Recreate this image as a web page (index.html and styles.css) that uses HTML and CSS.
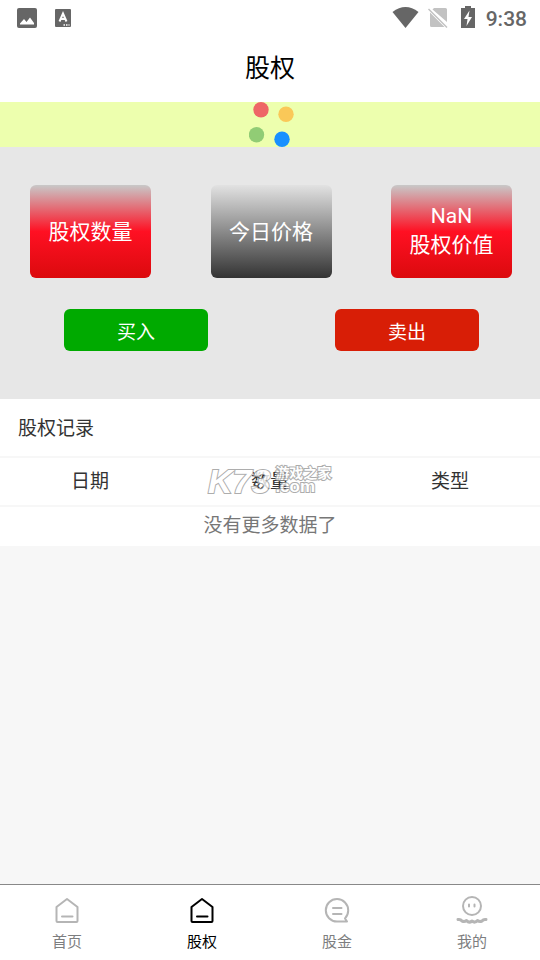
FILE: index.html
```html
<!DOCTYPE html>
<html lang="zh-CN">
<head>
<meta charset="utf-8">
<meta name="viewport" content="width=device-width, initial-scale=1">
<title>股权</title>
<link rel="stylesheet" href="styles.css">
</head>
<body>
<div class="status">
  <svg class="status-notices" viewBox="0 0 80 36" aria-hidden="true">
    <rect x="17" y="8" width="20" height="20" rx="2" fill="#666"/>
    <path d="M20 24.500V23.500L24 19l2.500 3L30 17.500 34 23v1.500z" fill="#fff"/>
    <rect x="55" y="9" width="16" height="18" rx="1" fill="#666"/>
    <path d="M59.500 21.500 63 13.500l3.500 8M61 19h4" fill="none" stroke="#fff" stroke-width="2"/>
    <path d="M63.500 25h6" stroke="#fff" stroke-width="1.500" stroke-dasharray="1.500 1"/>
  </svg>
  <div class="status-right">
    <svg class="status-signals" viewBox="0 0 88 36" aria-hidden="true">
      <path d="M.5 12Q13.500 2 26.500 12L13.500 28z" fill="#666"/>
      <path d="M42 8h11.500q1.500 0 1.500 1.500V22L40.500 9.500zM38 12.500l14.500 14.500H39.500Q38 27 38 25.500z" fill="#c2c2c2"/>
      <path d="M36.500 9 55 27.500" stroke="#c2c2c2" stroke-width="1.500"/>
      <path d="M69 8h4V6h6v2h4v20H69z" fill="#666"/>
      <path d="M77.500 10.500 72 19h3.500l-1 7 5.500-9h-3.500z" fill="#fff"/>
    </svg>
    <time class="clock">9:38</time>
  </div>
</div>
<header class="header"><h1 class="title">股权</h1></header>
<div class="loader">
  <svg class="loader-dots" viewBox="0 0 46 46" role="img" aria-label="加载中">
    <circle cx="12" cy="7.700" r="7.700" fill="#ee6666"/>
    <circle cx="37" cy="12.300" r="7.700" fill="#fac858"/>
    <circle cx="7.500" cy="32.700" r="7.700" fill="#91cc75"/>
    <circle cx="33" cy="37.300" r="7.700" fill="#1890ff"/>
  </svg>
</div>
<main class="main">
  <section class="panel">
    <div class="cards">
      <div class="card card-red"><span>股权数量</span></div>
      <div class="card card-dark"><span>今日价格</span></div>
      <div class="card card-red card-value"><span>NaN</span><span>股权价值</span></div>
    </div>
    <div class="actions">
      <button class="action buy" type="button">买入</button>
      <button class="action sell" type="button">卖出</button>
    </div>
  </section>
  <section class="records">
    <h2 class="records-title">股权记录</h2>
    <div class="table-wrap">
      <table class="table">
        <thead><tr><th>日期</th><th>数量</th><th>类型</th></tr></thead>
        <tbody><tr><td colspan="3">没有更多数据了</td></tr></tbody>
      </table>
      <div class="watermark">
        <span class="mark-logo">K73</span>
        <span class="mark-side"><span class="mark-name">游戏之家</span><span class="mark-domain">.com</span></span>
      </div>
    </div>
  </section>
</main>
<nav class="tabs">
  <a class="tab" href="#home">
    <svg class="tab-icon" viewBox="0 0 32 32" aria-hidden="true"><path d="M5.500 12 16 4 26.500 12V26q0 1-1 1h-19q-1 0-1-1zM11 21.500h10.500" /></svg>
    <span>首页</span>
  </a>
  <a class="tab tab-active" href="#equity" aria-current="page">
    <svg class="tab-icon" viewBox="0 0 32 32" aria-hidden="true"><path d="M5.500 12 16 4 26.500 12V26q0 1-1 1h-19q-1 0-1-1zM11 21.500h10.500" /></svg>
    <span>股权</span>
  </a>
  <a class="tab" href="#fund">
    <svg class="tab-icon" viewBox="0 0 32 32" aria-hidden="true"><path d="M26 26.500H16A11.200 11.200 0 1 1 27.200 15.500q0 4.500-3.200 8zM12 13h8.500M12 19h8.500"/></svg>
    <span>股金</span>
  </a>
  <a class="tab" href="#mine">
    <svg class="tab-icon" viewBox="0 0 32 32" aria-hidden="true"><circle cx="16" cy="11" r="9"/><path d="M13 9.500v2M18.500 9.500v2"/><path class="wave" d="M2 24.500q2.500-.5 4 1.500 2.500 1 4.500-.5 2.500 3 5.500.5 3 2.500 5.500-.5 2 1.500 4.500.5 1.500-2 4-1.500"/></svg>
    <span>我的</span>
  </a>
</nav>
</body>
</html>
```

FILE: styles.css
```css
* {
  box-sizing: border-box;
}

body {
  display: flex;
  flex-direction: column;
  min-height: 100vh;
  margin: 0;
  background: #f7f7f7;
  color: #333;
  font-family: Roboto, "Noto Sans CJK SC", sans-serif;
  font-size: 19px;
}

h1,
h2 {
  margin: 0;
  font-weight: 400;
}

.status {
  display: flex;
  justify-content: space-between;
  height: 36px;
  background: #fff;
}

.status-notices {
  width: 80px;
  height: 36px;
}

.status-right {
  display: flex;
  gap: 6px;
  padding-right: 13px;
}

.status-signals {
  width: 88px;
  height: 36px;
}

.clock {
  color: #666;
  font-size: 21px;
  font-weight: 500;
  line-height: 38px;
}

.header {
  background: #fff;
  text-align: center;
}

.title {
  color: #000;
  font-size: 25px;
  line-height: 66px;
}

.loader {
  display: flex;
  justify-content: center;
  height: 45px;
  padding-left: 4px;
  background: #edffae;
}

.loader-dots {
  width: 46px;
  height: 46px;
}

.main {
  flex: 1;
}

.panel {
  padding: 38px 0 48px;
  background: #e7e7e7;
}

.cards,
.actions {
  display: flex;
  justify-content: space-between;
}

.cards {
  padding: 0 28px 0 30px;
}

.card {
  display: flex;
  flex-direction: column;
  align-items: center;
  justify-content: center;
  width: 121px;
  height: 93px;
  padding-top: 2px;
  border-radius: 6px;
  color: #fff;
  font-size: 21px;
  line-height: 29px;
}

.card-value {
  padding: 0 0 2px;
}

.card-red {
  background: linear-gradient(#c8c8c8, #ff1023 50%, #db0a0d);
}

.card-dark {
  background: linear-gradient(#e2e2e2, #333);
}

.actions {
  margin-top: 31px;
  padding: 0 61px 0 64px;
}

.action {
  width: 144px;
  height: 42px;
  padding: 0;
  border: 0;
  border-radius: 6px;
  color: #fff;
  font: inherit;
}

.buy {
  background: #00aa00;
}

.sell {
  background: #d81e06;
}

.records {
  background: #fff;
}

.records-title {
  padding: 2px 0 0 18px;
  font-size: 19px;
  line-height: 55px;
}

.table-wrap {
  position: relative;
}

.table {
  width: 100%;
  border-collapse: separate;
  border-spacing: 0;
  table-layout: fixed;
}

.table th,
.table td {
  padding: 0;
  font-weight: 400;
  line-height: 28px;
  text-align: center;
}

.table th {
  height: 49px;
  border-top: 2px solid #f7f7f7;
}

.table td {
  height: 41px;
  border-top: 2px solid #f7f7f7;
  padding-bottom: 2px;
  color: #777;
}

.watermark {
  position: absolute;
  top: 10px;
  left: 50%;
  display: flex;
  gap: 5px;
  margin-left: -62px;
  color: #fff;
  font-weight: 700;
  opacity: 0.8;
  paint-order: stroke fill;
  -webkit-text-stroke: 2px #999;
}

.mark-logo {
  font-family: "Liberation Sans", sans-serif;
  font-size: 34px;
  font-style: italic;
  line-height: 30px;
}

.mark-side {
  display: flex;
  flex-direction: column;
}

.mark-name {
  font-size: 14px;
  line-height: 15px;
}

.mark-domain {
  font-family: "Liberation Sans", sans-serif;
  font-size: 17px;
  line-height: 12px;
}

.tabs {
  display: flex;
  border-top: 1px solid #888;
  background: #fff;
}

.tab {
  display: flex;
  flex: 1;
  flex-direction: column;
  align-items: center;
  height: 75px;
  padding: 10px 1px 0 0;
  color: #7d7e80;
  font-size: 15px;
  line-height: 30px;
  text-decoration: none;
}

.tab-icon {
  width: 32px;
  height: 32px;
  fill: none;
  stroke: #b5b5b5;
  stroke-width: 2;
  stroke-linecap: round;
  stroke-linejoin: round;
}

.wave {
  stroke-width: 3;
}

.tab-active {
  color: #000;
}

.tab-active .tab-icon {
  stroke: #000;
}
```
